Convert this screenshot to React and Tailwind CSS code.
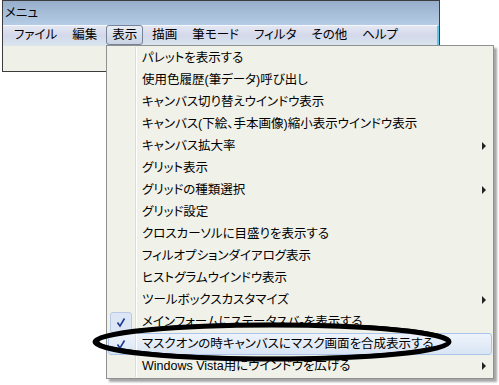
const MENUBAR = ["ファイル", "編集", "表示", "描画", "筆モード", "フィルタ", "その他", "ヘルプ"];

const ITEMS = [
    { label: "パレットを表示する" },
    { label: "使用色履歴(筆データ)呼び出し" },
    { label: "キャンバス切り替えウインドウ表示" },
    { label: "キャンバス(下絵、手本画像)縮小表示ウインドウ表示" },
    { label: "キャンバス拡大率", sub: true },
    { label: "グリット表示" },
    { label: "グリッドの種類選択", sub: true },
    { label: "グリッド設定" },
    { label: "クロスカーソルに目盛りを表示する" },
    { label: "フィルオプションダイアログ表示" },
    { label: "ヒストグラムウインドウ表示" },
    { label: "ツールボックスカスタマイズ", sub: true },
    { label: "メインフォームにステータスバ-を表示する", checked: true },
    { label: "マスクオンの時キャンバスにマスク画面を合成表示する", checked: true, hover: true },
    { label: "Windows Vista用にウインドウを広げる", sub: true },
];

const Check = () => (
    <svg width="10" height="11" viewBox="0 0 10 11" className="block">
        <path d="M1.5 5.5 L4 9 L8.5 1.5" fill="none" stroke="#1c3a94" strokeWidth="1.6" />
    </svg>
);

const MenuRow = ({ item }) => {
    const rowCls = item.hover
        ? "border-[#a9c6ea] bg-gradient-to-b from-[#eef3fb] to-[#d9e5f4]"
        : "border-transparent";
    return (
        <div className={"flex items-center h-[22px] mx-[1px] rounded-[3px] border " + rowCls}>
            <div className="w-[26px] h-full flex items-center justify-center">
                {item.checked && !item.hover ? (
                    <div className="w-[22px] h-[21px] -ml-[3px] rounded-[3px] border border-[#b9c9e6] bg-[#dde6f5] flex items-center justify-center">
                        <Check />
                    </div>
                ) : item.checked ? (
                    <div className="-ml-[3px]"><Check /></div>
                ) : null}
            </div>
            <div className="w-[2px] h-[22px] border-l border-[#dcddd6] bg-white"></div>
            <div className="flex-1 pl-[5px] whitespace-nowrap text-black">{item.label}</div>
            {item.sub && (
                <div className="mr-[5px] w-0 h-0 border-y-[4px] border-y-transparent border-l-[4px] border-l-[#222]"></div>
            )}
        </div>
    );
};

const App = () => {
    return (
        <div className="relative w-[499px] h-[385px] bg-white overflow-hidden text-[12.5px] leading-none font-['Liberation_Sans','Noto_Sans_CJK_JP',sans-serif] [font-feature-settings:'palt']">
            {/* window */}
            <div className="ml-[2px] w-[438px] h-[72px] border border-[#3c3c3c] flex flex-col">
                <div className="h-[24px] flex items-center pl-[2px] bg-gradient-to-b from-[#97afcb] to-[#b4cce5] text-black">
                    メニュ
                </div>
                <div className="h-[20px] flex items-center pl-[5px] gap-[3px] border-t border-[#f4f7fc] bg-gradient-to-b from-[#e4e7f2] via-[#d4d8ea] to-[#d7e5ef] border-r-2 border-r-[#5fc8e8]">
                    {MENUBAR.map((m) => (
                        <div
                            key={m}
                            className={
                                "h-[20px] -mt-[1px] flex items-center px-[5px] rounded-[3px] border " +
                                (m === "表示"
                                    ? "border-[#77839a] bg-gradient-to-b from-[#e9edf4] to-[#c9d3e2]"
                                    : "border-transparent")
                            }
                        >
                            {m}
                        </div>
                    ))}
                </div>
                <div className="flex-1 bg-[#eff0e7] border-t border-[#dfe3ea]"></div>
            </div>

            {/* dropdown */}
            <div className="absolute left-[106px] top-[45px] w-[388px] py-[1px] border border-[#909090] bg-[#f0f1e9] shadow-[3px_3px_2px_rgba(0,0,0,0.35)]">
                {ITEMS.map((it) => (
                    <MenuRow key={it.label} item={it} />
                ))}
            </div>

            {/* hand drawn circle */}
            <svg className="absolute left-[88px] top-[318px] pointer-events-none" width="370" height="50" viewBox="0 0 370 50">
                <ellipse cx="184" cy="24" rx="177" ry="17" fill="none" stroke="#000" strokeWidth="5" />
                <ellipse cx="186" cy="23" rx="176" ry="17" fill="none" stroke="#000" strokeWidth="2.5" />
            </svg>
        </div>
    );
};

export default App;
